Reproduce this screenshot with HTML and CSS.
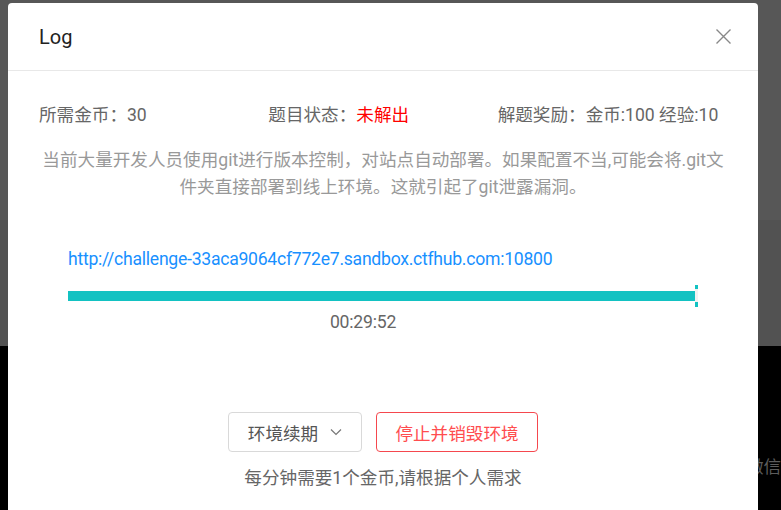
FILE: index.html
```html
<!DOCTYPE html>
<html lang="zh-CN">
<head>
<meta charset="utf-8">
<link rel="stylesheet" href="styles.css">
</head>
<body>
<div class="backdrop">
  <div class="band band-top"></div>
  <div class="band band-mid"></div>
  <div class="band band-bottom"><span class="wechat">微信</span></div>
</div>
<div class="modal">
  <div class="modal-header">
    <span class="modal-title">Log</span>
    <svg class="close" width="15" height="15" viewBox="0 0 15 15"><path d="M0.5 0.5L14.5 14.5M14.5 0.5L0.5 14.5" stroke="#888" stroke-width="1.4" fill="none"/></svg>
  </div>
  <div class="modal-body">
    <div class="info-row">
      <div>所需金币：30</div>
      <div>题目状态：<span class="unsolved">未解出</span></div>
      <div>解题奖励：金币:100 经验:10</div>
    </div>
    <p class="desc">当前大量开发人员使用git进行版本控制，对站点自动部署。如果配置不当,可能会将.git文件夹直接部署到线上环境。这就引起了git泄露漏洞。</p>
    <div class="env">
      <a class="url">http://challenge-33aca9064cf772e7.sandbox.ctfhub.com:10800</a>
      <div class="progress">
        <div class="progress-bar"></div>
        <div class="progress-end"></div>
      </div>
      <div class="timer">00:29:52</div>
    </div>
    <div class="actions">
      <button class="btn btn-default">环境续期<svg class="chev" width="12" height="8" viewBox="0 0 12 8"><path d="M1 1.5L6 6.5L11 1.5" stroke="#777" stroke-width="1.2" fill="none"/></svg></button>
      <button class="btn btn-danger">停止并销毁环境</button>
    </div>
    <div class="note">每分钟需要1个金币,请根据个人需求</div>
  </div>
</div>
</body>
</html>
```

FILE: styles.css
```css
* { box-sizing: border-box; }
html, body { margin: 0; padding: 0; height: 100%; overflow: hidden; }
body {
  font-family: Roboto, "Noto Sans CJK SC", sans-serif;
  font-size: 17.6px;
  background: #000;
}
.backdrop { display: flex; flex-direction: column; height: 510px; }
.band-top { height: 220px; background: #575757; }
.band-mid { height: 126px; background: #525252; }
.band-bottom { flex: 1; background: #000; position: relative; }
.wechat {
  position: absolute;
  left: 746px;
  top: 109px;
  color: #5c5c5c;
  line-height: 24px;
  white-space: nowrap;
}
.modal {
  position: absolute;
  left: 8px;
  top: 3px;
  width: 750px;
  height: 540px;
  background: #fff;
  border-radius: 4px;
}
.modal-header {
  height: 68px;
  border-bottom: 1px solid #e8e8e8;
  display: flex;
  align-items: center;
  justify-content: space-between;
  padding: 0 27px 0 31px;
}
.modal-title { font-size: 20px; color: #222; font-weight: 400; }
.modal-body { padding: 0 31px; }
.info-row {
  display: grid;
  grid-template-columns: 1fr 1fr 1fr;
  margin-top: 32px;
  line-height: 24px;
  color: #666;
}
.unsolved { color: #f00; }
.desc {
  margin: 20px 0 0;
  text-align: center;
  color: #999;
  line-height: 27px;
}
.env { padding: 0 29px; margin-top: 46px; }
.url { display: block; color: #1890ff; line-height: 24px; letter-spacing: -0.26px; }
.progress {
  position: relative;
  margin-top: 20px;
  height: 10px;
  width: 630px;
}
.progress-bar { height: 10px; width: 627px; background: #13c2c2; }
.progress-end {
  position: absolute;
  left: 627px;
  top: -6px;
  width: 3px;
  height: 22px;
  background: linear-gradient(#13c2c2 0 4px, #f2f2f2 4px 17px, #13c2c2 17px);
}
.timer {
  margin-top: 10px;
  line-height: 22px;
  color: #666;
  width: 590px;
  text-align: center;
  letter-spacing: -0.2px;
}
.actions {
  display: flex;
  justify-content: center;
  gap: 14px;
  margin-top: 79px;
}
.btn {
  height: 40px;
  border-radius: 4px;
  font-family: inherit;
  font-size: 17.6px;
  background: #fff;
  display: flex;
  align-items: center;
  justify-content: center;
}
.btn-default { width: 134px; border: 1px solid #d9d9d9; color: #555; gap: 12px; }
.btn-danger { width: 162px; border: 1px solid #f5484e; color: #ff4d4f; }
.note {
  margin-top: 14px;
  text-align: center;
  color: #666;
  line-height: 24px;
}
```
